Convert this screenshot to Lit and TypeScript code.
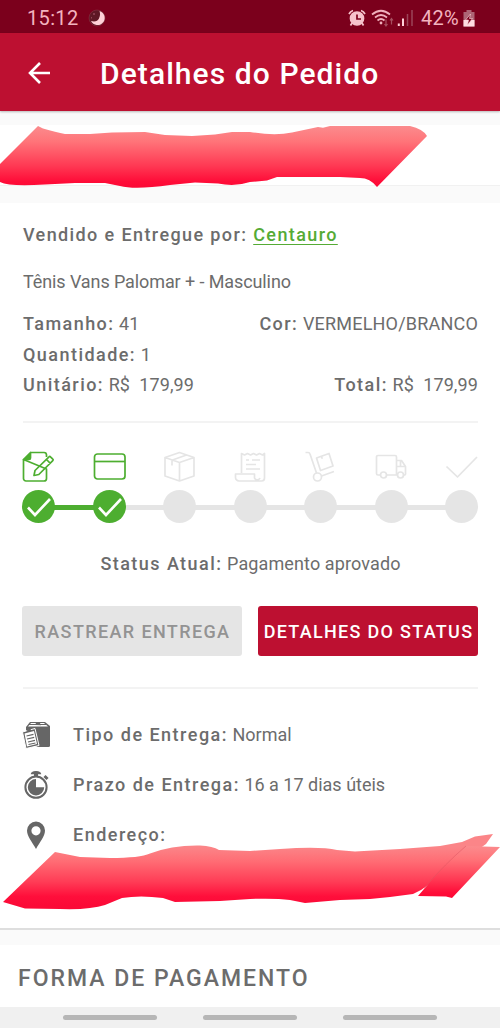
import { LitElement, html, svg, css } from "lit";
import { customElement } from "lit/decorators.js";

const doc = svg`<path d="M8.500 1.500H22a2.500 2.500 0 0 1 2.500 2.500V6M24.500 18v9.500a2.500 2.500 0 0 1-2.500 2.500H4A2.500 2.500 0 0 1 1.500 27.500V8.500z"/><path d="M8.500 1.500V7a1.500 1.500 0 0 1-1.500 1.500H1.500z" fill="currentColor"/><path d="M12 24.500l1-5L27 5.800a1 1 0 0 1 1.500 0l2.300 2.300a1 1 0 0 1 0 1.500L16.800 23.500zM24.500 8.500l3.800 3.800"/>`;
const card = svg`<rect x="1.500" y="3" width="30.500" height="25" rx="3"/><path d="M1.500 10.500h30.500"/>`;
const box = svg`<path d="M16.500 1.500L31 6.500v18.500l-14.500 5L2 25V6.500zM2 6.500l14.500 5L31 6.500M16.500 11.500V30M9 9v5.500M9.500 9l14-5"/>`;
const receipt = svg`<path d="M7.500 22V2.500l3 1.500 3-1.500 3 1.500 3-1.500 3 1.500 3-1.500 3 1.500 2-1.500V27a3 3 0 0 1-3 3H5a3.500 3.500 0 0 1-3.500-3.500V23h19v4a3 3 0 0 0 5.500 0M12 9h3M18 9h8M12 13.500h10M12 18h14"/>`;
const dolly = svg`<path d="M1.500 1.500h2.500a2 2 0 0 1 2 1.500l6.500 19M17.500 25l12.500-4.500"/><circle cx="13.500" cy="26" r="4"/><path d="M12.500 7l12.500-4.500 4 12.500-12.500 4.500zM17.500 5.500l.8 2.200"/>`;
const truck = svg`<path d="M5.500 24H3a1.500 1.500 0 0 1-1.500-1.500V6A1.500 1.500 0 0 1 3 4.500h17A1.500 1.500 0 0 1 21.500 6v18h-10M21.500 9.500h5l4 6V22a1.500 1.500 0 0 1-1.500 2M21.500 15.500H30.500M25.500 10v5.500"/><circle cx="8.500" cy="24" r="3"/><circle cx="25.500" cy="24" r="3"/>`;
const done = svg`<path d="M1.500 15.500L12.500 26 32 6"/>`;

const steps = [doc, card, box, receipt, dolly, truck, done];

const strokeTop = "M0 164L38 126L43 128.500Q56 132 65 134L90 134L112 132.500L145 132L165 135L192 136L215 134.500L232 132L250 132Q275 136 292 132.500L318 127L323 127.700L330 126L410 126Q423 129 427 136L377 187Q370 178 360 178L340 177L277 177L267 180.500L250 182Q235 187 218 183.500L195 182.500L170 185Q135 190 120 186L105 183L75 183L45 184.500Q10 187 0 182Z";
const strokeBottom = "M3 902L55 852L80 857L110 858Q140 858 150 853.500Q172 845 200 845.500Q213 846 219 850L250 851L280 849Q320 846 337 850L355 851.500L400 849L440 846L462 842L475 836.500L493 834L486 844L421 890L413 894L390 897L370 899L340 900L305 903L290 900Q275 898 250 899L220 901L175 902L163 898Q140 895 122 898L105 905Q90 910 60 909L25 908.500Z";

@customElement("app-root")
export class AppRoot extends LitElement {
  static styles = css`
    :host { display: block; position: relative; width: 500px; height: 1028px; overflow: hidden; background: #fafafa; color: #6c6c6c; font: 400 18px/30px Roboto, sans-serif; }
    .page { display: flex; flex-direction: column; height: 1028px; }
    svg { display: block; flex: none; }
    .status { height: 33px; flex: none; background: #7b001c; color: #f3b3bf; display: flex; align-items: center; padding: 3px 25px 0 27px; box-sizing: border-box; font-size: 20px; }
    .time { letter-spacing: .35px; }
    .moon { margin-left: 9px; }
    .tray { margin-left: auto; display: flex; align-items: center; }
    .pct { margin: 0 4px 0 7px; letter-spacing: .3px; }
    .bar { height: 78px; flex: none; background: #bd1031; color: #fff; display: flex; align-items: center; padding: 1px 28px 0; box-sizing: border-box; box-shadow: 0 1px 2px #0004; }
    .title { margin: 2px 0 0 50px; font-size: 30px; font-weight: 500; letter-spacing: 1.080px; white-space: nowrap; }
    .order { height: 60px; flex: none; margin-top: 14px; background: #fff; border-bottom: 1px solid #f1f1f1; }
    .details { height: 727px; flex: none; margin-top: 17px; background: #fff; border-bottom: 2px solid #dedede; box-sizing: border-box; padding: 17px 22px 0 23px; }
    .row { display: flex; justify-content: space-between; white-space: nowrap; height: 30.500px; }
    .row, .current { letter-spacing: .12px; }
    .color { letter-spacing: .2px; }
    b { font-weight: 500; letter-spacing: 1.45px; }
    .seller b { letter-spacing: 1.390px; }
    .link { color: #55ab35; text-decoration: underline; text-decoration-thickness: 1px; text-underline-offset: 3px; }
    .seller { height: 47px; }
    .name { height: 42px; letter-spacing: -.1px; }
    .rule { height: 2px; background: #f3f3f3; }
    .items-end { margin-top: 20.500px; }
    .steps { display: flex; justify-content: space-between; margin: 28px 0 0 -1px; color: #e5e5e5; }
    .step { width: 33px; display: flex; flex-direction: column; gap: 8px; position: relative; }
    .step:not(:last-child)::after { content: ""; position: absolute; left: 32px; top: 54px; width: 40px; height: 5px; background: #e5e5e5; }
    .step.on { color: #4dae30; }
    .step.linked::after { background: #4dae30; }
    .dot { width: 33px; height: 33px; border-radius: 50%; background: currentColor; z-index: 1; }
    .current { text-align: center; margin-top: 26px; height: 30px; }
    .buttons { display: grid; grid-template-columns: 220px 220px; gap: 16px; margin: 27px -1px 30.500px; }
    .btn { height: 50px; border: 0; border-radius: 3px; padding: 2px 0 0 1px; font: 500 18px/48px Roboto, sans-serif; letter-spacing: 1.380px; background: #e5e5e5; color: #939393; white-space: nowrap; }
    .btn.primary { background: #bd1031; color: #fff; letter-spacing: 1.3px; }
    .info { display: flex; align-items: center; height: 50px; gap: 22px; }
    .infos { padding-top: 21px; }
    .info svg { margin-left: -1px; }
    .info b { letter-spacing: 1.480px; }
    .payment { height: 62px; flex: none; margin-top: 15px; background: #fff; }
    .heading { margin: 0; padding-left: 18px; font: 500 23px/67px Roboto, sans-serif; letter-spacing: 2px; }
    .nav { flex: 1; background: #f0f0f0; display: flex; justify-content: center; gap: 46.500px; padding-top: 8px; }
    .pill { width: 93.500px; height: 5px; border-radius: 3px; background: #b6b6b6; }
    .marks { position: absolute; inset: 0; pointer-events: none; }
  `;

  render() {
    return html`
      <div class="page">
        <div class="status">
          <span class="time">15:12</span>
          <svg class="moon" width="18" height="18" viewBox="0 0 18 18"><circle cx="9" cy="9" r="8" fill="#5e1825" stroke="#8c3a4b" stroke-width=".5"/><path d="M11.500 2A7.200 7.200 0 1 1 3 12Q9 13.500 11 9.500Q12.800 6 11.500 2Z" fill="#ffd0d7"/><path d="M6 4v2M5 5h2M3.500 8v1.500" stroke="#a85767" stroke-width=".7"/></svg>
          <div class="tray">
            <svg width="18" height="18" viewBox="0 0 18 18" fill="none" stroke="#f6c3cc" stroke-width="1.700"><path d="M1 5A7 7 0 0 1 5 1.500M17 5A7 7 0 0 0 13 1.500M4 14l-1.500 2.500M14 14l1.500 2.500"/><circle cx="9" cy="9.500" r="6.500" fill="#f6c3cc"/><path d="M9 5.500V10h4" stroke="#7b001c"/></svg>
            <svg width="48" height="18" viewBox="0 0 48 18" fill="none" stroke="#efb0bc" stroke-width="1.700"><path d="M6 5.500Q15-2 24 5.500M9 8.500Q15 3.500 21 8.500M11.500 11.500Q15 8.500 18.500 11.500"/><circle cx="15" cy="14" r="1.400" fill="#efb0bc" stroke="none"/><path d="M20 10.500v6M18.500 15l1.500 2 1.500-2M25.500 15.500v-6M24 11.500l1.500-2 1.500 2" stroke="#a64f60" stroke-width="1.200"/><path d="M32.800 17v-2.500M37 17V9.500" stroke="#ffd0d8" stroke-width="2"/><path d="M41.500 17V5M46 17V1" stroke="#9c4458" stroke-width="1.500"/></svg>
            <span class="pct">42%</span>
            <svg width="12" height="18" viewBox="0 0 12 18"><path d="M3.500 1h5v2H11.500v14.500H.5V3h3z" fill="#ad6575"/><path d="M.5 11h11v6.500H.5z" fill="#ffdce1"/><path d="M7.500 5L2.500 11H5.500L4.500 16 9.500 9.500H6.500z" fill="#7b001c" stroke="#ffdce1" stroke-width=".6"/></svg>
          </div>
        </div>
        <header class="bar">
          <svg width="22" height="22" viewBox="0 0 22 22" fill="none" stroke="#fff" stroke-width="2.600"><path d="M22 11H2M12 1L2 11l10 10"/></svg>
          <h1 class="title">Detalhes do Pedido</h1>
        </header>
        <section class="order"></section>
        <section class="details">
          <div class="row seller"><span><b>Vendido e Entregue por: <span class="link">Centauro</span></b></span></div>
          <div class="name">Tênis Vans Palomar + - Masculino</div>
          <div class="row"><span><b>Tamanho:</b> 41</span><span class="color"><b>Cor:</b> VERMELHO/BRANCO</span></div>
          <div class="row"><span><b>Quantidade:</b> 1</span></div>
          <div class="row"><span><b>Unitário:</b> R$&nbsp; 179,99</span><span><b>Total:</b> R$&nbsp; 179,99</span></div>
          <div class="rule items-end"></div>
          <div class="steps">
            ${steps.map((icon, i) => html`
              <div class="step ${i < 2 ? "on" : ""} ${i < 1 ? "linked" : ""}">
                <svg width="33" height="31" viewBox="0 0 33 31" fill="none" stroke="currentColor" stroke-width="1.700" stroke-linejoin="round">${icon}</svg>
                <div class="dot">${i < 2 ? html`<svg width="33" height="33" viewBox="0 0 33 33" fill="none" stroke="#fff" stroke-width="2.600"><path d="M6 17.500l7 7.500L28 9"/></svg>` : ""}</div>
              </div>`)}
          </div>
          <div class="current"><b>Status Atual:</b> Pagamento aprovado</div>
          <div class="buttons"><button class="btn">RASTREAR ENTREGA</button><button class="btn primary">DETALHES DO STATUS</button></div>
          <div class="rule"></div>
          <div class="infos">
            <div class="info">
              <svg width="29" height="28" viewBox="0 0 29 28"><path d="M4 6L8 1h15l5 4v19.500q0 1.500-1.500 1.500H15L4 12z" fill="#666"/><path d="M6 5.500L9 2h5l-1 2 6 .2L18 2h4l4 3.500z" fill="#fff"/><path d="M7 3.500h17" stroke="#666"/><path d="M.5 11L13 7.500l4 17L4 27.500z" fill="#666" stroke="#fff" stroke-width="1"/><path d="M2.500 12.500l9.500-2.500 3 13-10 2.500z" fill="#fff"/><path d="M4.500 15l7-1.700M5 18l7.200-1.700M6 21l7-1.700M6.500 23.500l7-1.500" stroke="#666" stroke-width="1.200"/><path d="M4.500 11l1-2.500 2.500-.7 2 2z" fill="#666"/></svg>
              <span><b>Tipo de Entrega:</b> Normal</span>
            </div>
            <div class="info">
              <svg width="29" height="30" viewBox="0 0 29 30" fill="none" stroke="#666"><circle cx="14" cy="17.200" r="10.600" stroke-width="2"/><path d="M14 9V17.200H22.200A8.200 8.200 0 1 1 14 9Z" fill="#666" stroke="none"/><path d="M14 3v4" stroke-width="4"/><path d="M9.500 3.700Q10 1.500 14 1.500t4.500 2.200z" fill="#666" stroke-width="1.200"/><path d="M22.500 6l3 3" stroke-width="3"/></svg>
              <span><b>Prazo de Entrega:</b> 16 a 17 dias úteis</span>
            </div>
            <div class="info">
              <svg width="29" height="28" viewBox="0 0 29 28"><path fill-rule="evenodd" d="M14 .5a9 9 0 0 1 9 9c0 6-5.500 12-9 18.500C10.500 21.500 5 15.500 5 9.500a9 9 0 0 1 9-9zm0 4.700a4.600 4.600 0 1 0 0 9.200 4.600 4.600 0 0 0 0-9.200z" fill="#666"/></svg>
              <span><b>Endereço:</b></span>
            </div>
          </div>
        </section>
        <section class="payment"><h2 class="heading">FORMA DE PAGAMENTO</h2></section>
        <nav class="nav"><i class="pill"></i><i class="pill"></i><i class="pill"></i></nav>
      </div>
      <svg class="marks" width="500" height="1028" viewBox="0 0 500 1028">
        <defs>
          <linearGradient id="a" x1="0" y1="0" x2="0" y2="1"><stop offset="0" stop-color="#fb8b8d"/><stop offset=".25" stop-color="#ff7479"/><stop offset=".65" stop-color="#ff3853"/><stop offset=".9" stop-color="#ff0c38"/><stop offset="1" stop-color="#fb0835"/></linearGradient>
          <linearGradient id="b" gradientUnits="userSpaceOnUse" x1="0" y1="847" x2="0" y2="905"><stop offset="0" stop-color="#fb8588"/><stop offset=".25" stop-color="#ff6c74"/><stop offset=".6" stop-color="#ff3c56"/><stop offset=".85" stop-color="#ff0f3b"/><stop offset="1" stop-color="#fb0a37"/></linearGradient>
        </defs>
        <path d=${strokeTop} fill="url(#a)"/>
        <path d=${strokeBottom} fill="url(#b)"/>
        <path d="M418 896Q445 864 466 846L500 847L452 898L446 896.500Z" fill="url(#a)"/>
        <path d="M424 888Q446 863 466 846" fill="none" stroke="#d9505e" stroke-opacity=".45"/>
      </svg>`;
  }
}
